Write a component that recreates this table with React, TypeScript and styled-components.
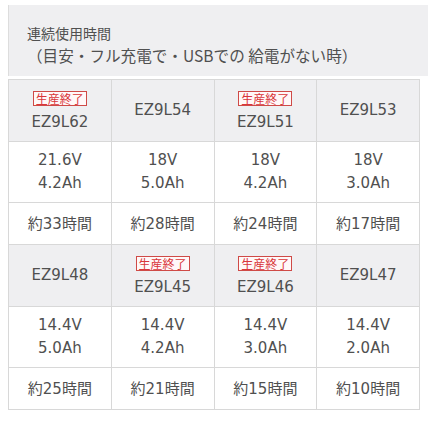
import styled, { createGlobalStyle } from "styled-components";

const GlobalStyle = createGlobalStyle`
  html, body {
    margin: 0;
    padding: 0;
    background: #ffffff;
  }
  body {
    font-family: "DejaVu Sans", "Noto Sans CJK JP", sans-serif;
    color: #505050;
  }
`;

const Page = styled.div`
  padding: 5px 0 0 8px;
  width: 428px;
  box-sizing: border-box;
  overflow: hidden;
`;

const Caption = styled.div`
  background: #efeff1;
  border-left: 1px solid #dddddd;
  padding: 17px 0 10px 18px;
  margin-right: -20px;
  font-family: "Noto Sans CJK JP", sans-serif;
  font-size: 15.6px;
  line-height: 22px;
  color: #505050;
`;

const CaptionTitle = styled.div`
  font-size: 14px;
`;

const Table = styled.table`
  width: 412px;
  margin-top: 3px;
  border-collapse: collapse;
  table-layout: fixed;
`;

const Cell = styled.td<{ $head?: boolean; $short?: boolean }>`
  border: 1px solid #d8d8d8;
  background: ${({ $head }) => ($head ? "#efeff1" : "#ffffff")};
  height: ${({ $head, $short }) => ($head ? 62 : $short ? 42 : 61)}px;
  padding: 0;
  box-sizing: border-box;
  text-align: center;
  vertical-align: middle;
  font-size: 15px;
  line-height: 23px;
  color: #505050;
`;

const Badge = styled.span`
  display: inline-block;
  border: 1px solid #cf4a47;
  background: #fff8f8;
  color: #d9363a;
  font-family: "Noto Sans CJK JP", sans-serif;
  font-size: 12px;
  line-height: 13px;
  padding: 0 2px;
  margin-bottom: 1px;
`;

const Jp = styled.span`
  font-family: "Noto Sans CJK JP", sans-serif;
`;

type Battery = {
  model: string;
  ended: boolean;
  volt: string;
  ah: string;
  hours: string;
};

const groups: Battery[][] = [
  [
    { model: "EZ9L62", ended: true, volt: "21.6V", ah: "4.2Ah", hours: "33" },
    { model: "EZ9L54", ended: false, volt: "18V", ah: "5.0Ah", hours: "28" },
    { model: "EZ9L51", ended: true, volt: "18V", ah: "4.2Ah", hours: "24" },
    { model: "EZ9L53", ended: false, volt: "18V", ah: "3.0Ah", hours: "17" },
  ],
  [
    { model: "EZ9L48", ended: false, volt: "14.4V", ah: "5.0Ah", hours: "25" },
    { model: "EZ9L45", ended: true, volt: "14.4V", ah: "4.2Ah", hours: "21" },
    { model: "EZ9L46", ended: true, volt: "14.4V", ah: "3.0Ah", hours: "15" },
    { model: "EZ9L47", ended: false, volt: "14.4V", ah: "2.0Ah", hours: "10" },
  ],
];

export default function App() {
  return (
    <>
      <GlobalStyle />
      <Page>
        <Caption>
          <CaptionTitle>連続使用時間</CaptionTitle>
          （目安・フル充電で・USBでの 給電がない時）
        </Caption>
        <Table>
          <tbody>
            {groups.map((g, i) => [
              <tr key={`m${i}`}>
                {g.map((b) => (
                  <Cell $head key={b.model}>
                    {b.ended && (
                      <>
                        <Badge>生産終了</Badge>
                        <br />
                      </>
                    )}
                    {b.model}
                  </Cell>
                ))}
              </tr>,
              <tr key={`s${i}`}>
                {g.map((b) => (
                  <Cell key={b.model}>
                    {b.volt}
                    <br />
                    {b.ah}
                  </Cell>
                ))}
              </tr>,
              <tr key={`h${i}`}>
                {g.map((b) => (
                  <Cell $short key={b.model}>
                    <Jp>約</Jp>
                    {b.hours}
                    <Jp>時間</Jp>
                  </Cell>
                ))}
              </tr>,
            ])}
          </tbody>
        </Table>
      </Page>
    </>
  );
}
